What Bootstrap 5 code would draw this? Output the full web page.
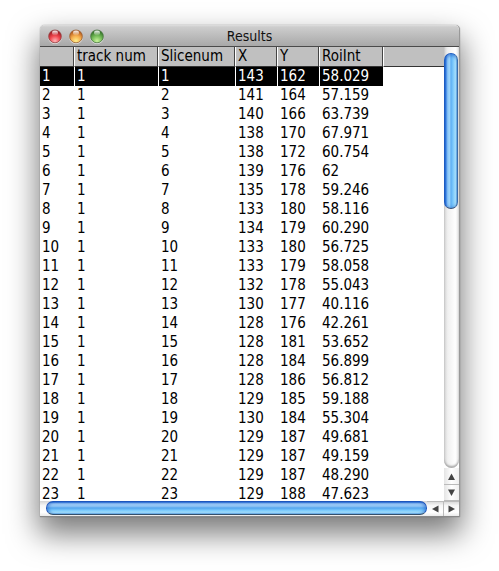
<!DOCTYPE html>
<html lang="en">
<head>
<meta charset="utf-8">
<meta name="viewport" content="width=device-width, initial-scale=1">
<title>Results</title>
<link rel="stylesheet" href="https://cdn.jsdelivr.net/npm/bootstrap@5.3.0/dist/css/bootstrap.min.css">
<style>
body{background:#fff;font-family:"DejaVu Sans Condensed","DejaVu Sans",sans-serif;color:#000;padding:25px 39px 54px 40px}
.window{min-height:0;border-radius:5px 5px 0 0;box-shadow:0 15px 30px 2px rgba(0,0,0,.52),0 0 1px rgba(0,0,0,.6);border-bottom:1px solid #888;border-right:1px solid #999;background:#fff}
.titlebar{height:22px;border-radius:5px 5px 0 0;background:linear-gradient(#dedede 0,#cdcdcd 2px,#a8a8a8 100%);border-bottom:1px solid #4a4a4a;display:grid;grid-template-columns:1fr auto 1fr}
.titlebar h1{font-size:14px;line-height:23px;margin:0;color:#111}
.lights{gap:7px;padding-left:8px}
button.plain{border:0;padding:0;background:none;display:block;line-height:0}
.viewport{min-height:0}
.results{border-collapse:separate;border-spacing:0;font-size:15px;line-height:19px;table-layout:fixed;width:100%}
.results th,.results td{padding:0 0 0 2px;height:19px;font-weight:400;white-space:nowrap;text-align:left}
.results thead th{background:#c0c0c0;border-bottom:1px solid #333;height:20px;line-height:18px;vertical-align:top}
.results thead th:not(:last-child){box-shadow:inset -1px 0 #444}
.results th+th,.results td+td{border-left:1px solid #fff}
.results .picked td:not(:last-child){background:#000;color:#fff}
.c-id{width:34px}.c-track{width:84px}.c-slice{width:77px}.c-pos{width:42px}.c-roi{width:64px}
.vbar{width:15px;flex:none}
.vtrack{background:linear-gradient(90deg,#d4d4d4,#f0f0f0 25%,#fafafa 60%,#fff 75%,#e6e6e6);padding-top:6px;border-radius:0 0 8px 8px;box-shadow:inset 0 -2px 2px #aaa}
.vthumb{height:37.5%;margin:0 1px 0 0;border:1px solid #1d5cc0;border-bottom-color:#344f7a;border-right-color:#3a6ca8;border-radius:7px;background:linear-gradient(90deg,#1f6cda 0,#8ac6f8 22%,#9bd3fa 38%,#5fb0f4 50%,#80ccfc 70%,#b8eeff 90%,#65b4ea);box-shadow:inset 0 2px 3px rgba(20,80,190,.45),inset 0 -1px 3px rgba(20,80,190,.3)}
.hbar{height:15px;flex:none;background:linear-gradient(#d4d4d4,#f6f6f6 30%,#fff 75%,#eaeaea)}
.hthumb{margin:0 0 1px 6px;border:1px solid #1d55bc;border-bottom-color:#344f6a;border-radius:7px;background:linear-gradient(#2a70d8 0,#9cc9f6 15%,#8fc4f5 35%,#55a6ee 50%,#7ccafc 70%,#b4ecff 92%,#65b4ea);box-shadow:inset 2px 0 3px rgba(20,80,190,.4),inset -2px 0 3px rgba(20,80,190,.4)}
.vbar button.plain{height:16px;background:linear-gradient(90deg,#e4e4e4,#fff 50%,#f0f0f0)}
.vbar button.plain+button.plain{border-top:1px solid #bbb;border-bottom:1px solid #bbb;height:17px}
.hbar button.plain{width:16px;border-top:1px solid #bbb}
.hbar button.plain+button.plain{border-left:1px solid #bbb}
</style>
<script src="https://cdn.jsdelivr.net/npm/bootstrap@5.3.0/dist/js/bootstrap.bundle.min.js"></script>
</head>
<body class="d-flex flex-column vh-100 overflow-hidden">
<main class="window d-flex flex-column flex-grow-1">
<header class="titlebar">
<div class="lights d-flex align-items-center">
<button class="plain" type="button" aria-label="Close"><svg width="14" height="15" viewBox="0 0 14 15"><defs><radialGradient id="r" cx=".5" cy=".85" r=".8"><stop offset="0" stop-color="#ffb5b8"/><stop offset=".5" stop-color="#f0464e"/><stop offset="1" stop-color="#96161d"/></radialGradient><linearGradient id="s" x1="0" y1="0" x2="0" y2="1"><stop offset="0" stop-color="#fff" stop-opacity=".95"/><stop offset="1" stop-color="#fff" stop-opacity=".1"/></linearGradient></defs><circle cx="7" cy="8" r="6.9" fill="#e2e2e2"/><circle cx="7" cy="7.4" r="6.4" fill="url(#r)" stroke="#8c4646" stroke-width=".8"/><ellipse cx="7" cy="3.9" rx="3" ry="2.3" fill="url(#s)"/></svg></button>
<button class="plain" type="button" aria-label="Minimize"><svg width="14" height="15" viewBox="0 0 14 15"><defs><radialGradient id="o" cx=".5" cy=".85" r=".8"><stop offset="0" stop-color="#fff08c"/><stop offset=".5" stop-color="#f5ac4c"/><stop offset="1" stop-color="#ad4f16"/></radialGradient></defs><circle cx="7" cy="8" r="6.9" fill="#e2e2e2"/><circle cx="7" cy="7.4" r="6.4" fill="url(#o)" stroke="#936036" stroke-width=".8"/><ellipse cx="7" cy="3.9" rx="3" ry="2.3" fill="url(#s)"/></svg></button>
<button class="plain" type="button" aria-label="Zoom"><svg width="14" height="15" viewBox="0 0 14 15"><defs><radialGradient id="g" cx=".5" cy=".85" r=".8"><stop offset="0" stop-color="#c9f59c"/><stop offset=".5" stop-color="#74bb58"/><stop offset="1" stop-color="#2c6b22"/></radialGradient></defs><circle cx="7" cy="8" r="6.9" fill="#e2e2e2"/><circle cx="7" cy="7.4" r="6.4" fill="url(#g)" stroke="#4b7344" stroke-width=".8"/><ellipse cx="7" cy="3.9" rx="3" ry="2.3" fill="url(#s)"/></svg></button>
</div>
<h1>Results</h1>
</header>
<div class="viewport d-flex flex-grow-1">
<div class="flex-grow-1">
<table class="results">
<colgroup><col class="c-id"><col class="c-track"><col class="c-slice"><col class="c-pos"><col class="c-pos"><col class="c-roi"><col></colgroup>
<thead><tr><th></th><th>track num</th><th>Slicenum</th><th>X</th><th>Y</th><th>RoiInt</th><th></th></tr></thead>
<tbody>
<tr class="picked"><td>1</td><td>1</td><td>1</td><td>143</td><td>162</td><td>58.029</td><td></td></tr>
<tr><td>2</td><td>1</td><td>2</td><td>141</td><td>164</td><td>57.159</td><td></td></tr>
<tr><td>3</td><td>1</td><td>3</td><td>140</td><td>166</td><td>63.739</td><td></td></tr>
<tr><td>4</td><td>1</td><td>4</td><td>138</td><td>170</td><td>67.971</td><td></td></tr>
<tr><td>5</td><td>1</td><td>5</td><td>138</td><td>172</td><td>60.754</td><td></td></tr>
<tr><td>6</td><td>1</td><td>6</td><td>139</td><td>176</td><td>62</td><td></td></tr>
<tr><td>7</td><td>1</td><td>7</td><td>135</td><td>178</td><td>59.246</td><td></td></tr>
<tr><td>8</td><td>1</td><td>8</td><td>133</td><td>180</td><td>58.116</td><td></td></tr>
<tr><td>9</td><td>1</td><td>9</td><td>134</td><td>179</td><td>60.290</td><td></td></tr>
<tr><td>10</td><td>1</td><td>10</td><td>133</td><td>180</td><td>56.725</td><td></td></tr>
<tr><td>11</td><td>1</td><td>11</td><td>133</td><td>179</td><td>58.058</td><td></td></tr>
<tr><td>12</td><td>1</td><td>12</td><td>132</td><td>178</td><td>55.043</td><td></td></tr>
<tr><td>13</td><td>1</td><td>13</td><td>130</td><td>177</td><td>40.116</td><td></td></tr>
<tr><td>14</td><td>1</td><td>14</td><td>128</td><td>176</td><td>42.261</td><td></td></tr>
<tr><td>15</td><td>1</td><td>15</td><td>128</td><td>181</td><td>53.652</td><td></td></tr>
<tr><td>16</td><td>1</td><td>16</td><td>128</td><td>184</td><td>56.899</td><td></td></tr>
<tr><td>17</td><td>1</td><td>17</td><td>128</td><td>186</td><td>56.812</td><td></td></tr>
<tr><td>18</td><td>1</td><td>18</td><td>129</td><td>185</td><td>59.188</td><td></td></tr>
<tr><td>19</td><td>1</td><td>19</td><td>130</td><td>184</td><td>55.304</td><td></td></tr>
<tr><td>20</td><td>1</td><td>20</td><td>129</td><td>187</td><td>49.681</td><td></td></tr>
<tr><td>21</td><td>1</td><td>21</td><td>129</td><td>187</td><td>49.159</td><td></td></tr>
<tr><td>22</td><td>1</td><td>22</td><td>129</td><td>187</td><td>48.290</td><td></td></tr>
<tr><td>23</td><td>1</td><td>23</td><td>129</td><td>188</td><td>47.623</td><td></td></tr>
</tbody>
</table>
</div>
<div class="vbar d-flex flex-column">
<div class="vtrack flex-grow-1"><div class="vthumb"></div></div>
<button class="plain" type="button" aria-label="Scroll up"><svg width="15" height="15" viewBox="0 0 15 15"><path d="M7.5 4.500 11 11H4Z" fill="#444"/></svg></button>
<button class="plain" type="button" aria-label="Scroll down"><svg width="15" height="15" viewBox="0 0 15 15"><path d="M4 4.500h7l-3.500 6.500Z" fill="#444"/></svg></button>
</div>
</div>
<div class="hbar d-flex position-relative">
<div class="hthumb flex-grow-1"></div>
<button class="plain" type="button" aria-label="Scroll left"><svg width="15" height="14" viewBox="0 0 15 14"><path d="M4 7 10.500 3.500v7Z" fill="#444"/></svg></button>
<button class="plain" type="button" aria-label="Scroll right"><svg width="15" height="14" viewBox="0 0 15 14"><path d="M11 7 4.500 3.500v7Z" fill="#444"/></svg></button>
</div>
</main>
</body>
</html>
